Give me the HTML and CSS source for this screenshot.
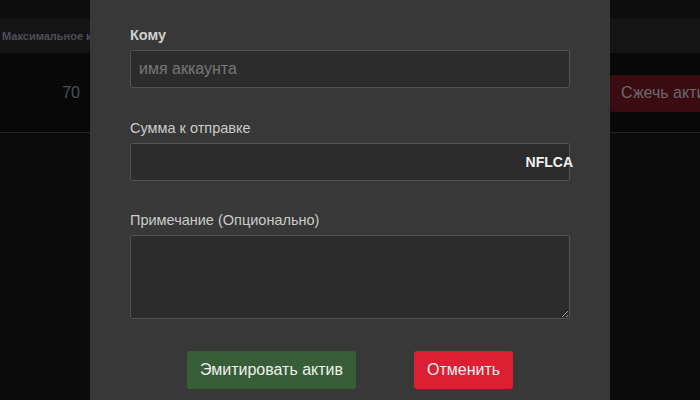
FILE: index.html
```html
<!DOCTYPE html>
<html lang="ru">
<head>
<meta charset="utf-8">
<title>Эмиссия</title>
<link rel="stylesheet" href="styles.css">
</head>
<body>
<div class="page">
  <div class="topbar"></div>
  <div class="table">
    <div class="thead">
      <div class="th">Максимальное количество</div>
      <div class="th"></div>
    </div>
    <div class="trow">
      <div class="td num">70</div>
      <div class="td act"><button class="burn">Сжечь актив</button></div>
    </div>
  </div>
</div>

<div class="modal">
  <div class="field">
    <label class="label strong">Кому</label>
    <input class="input" type="text" placeholder="имя аккаунта">
  </div>
  <div class="field">
    <label class="label">Сумма к отправке</label>
    <div class="amount">
      <input class="input" type="text">
      <span class="unit">NFLCA</span>
    </div>
  </div>
  <div class="field">
    <label class="label">Примечание (Опционально)</label>
    <textarea class="input area"></textarea>
  </div>
  <div class="actions">
    <button class="btn btn-green">Эмитировать актив</button>
    <button class="btn btn-red">Отменить</button>
  </div>
</div>
</body>
</html>
```

FILE: styles.css
```css
* { box-sizing: border-box; }
html, body { margin: 0; padding: 0; }
body {
  background: #0b0b0b;
  font-family: "Liberation Sans", Arial, sans-serif;
  width: 700px;
  height: 400px;
  overflow: hidden;
  position: relative;
}
.page { width: 700px; }
.topbar { height: 19px; background: #0d0d0d; }
.table { width: 100%; }
.thead {
  display: grid;
  grid-template-columns: 610px 90px;
  height: 34px;
  background: #141414;
  align-items: center;
}
.th {
  font-size: 11px;
  font-weight: bold;
  color: #4f4f57;
  padding-left: 2px;
  white-space: nowrap;
  overflow: hidden;
}
.trow {
  display: grid;
  grid-template-columns: 610px 90px;
  height: 80px;
  background: #080808;
  border-bottom: 1px solid #262626;
  align-items: center;
}
.td.num {
  font-size: 16px;
  color: #4c535a;
  width: 90px;
  text-align: right;
  padding-right: 10px;
}
.td.act { overflow: hidden; }
.burn {
  display: block;
  height: 37px;
  width: 140px;
  border: none;
  border-radius: 3px;
  background: #3a0b10;
  color: #6a6a6a;
  font-family: "Liberation Sans", Arial, sans-serif;
  font-size: 16px;
  text-align: left;
  padding: 0 0 0 11px;
  white-space: nowrap;
  margin-top: 1px;
}

.modal {
  position: absolute;
  left: 90px;
  top: 0;
  width: 520px;
  height: 420px;
  background: #383838;
  padding: 27px 40px 0;
}
.field { margin-bottom: 31.5px; }
.label {
  display: block;
  font-size: 14.5px;
  line-height: 17px;
  color: #cbcbcb;
  margin-bottom: 6px;
  white-space: nowrap;
}
.label.strong { font-weight: bold; color: #d0d0d0; }
.input {
  display: block;
  width: 440px;
  height: 38px;
  background: #2c2c2c;
  border: 1px solid #4b5555;
  border-radius: 2px;
  color: #ddd;
  font-family: "Liberation Sans", Arial, sans-serif;
  font-size: 16px;
  padding: 0 8px;
  outline: none;
}
.input::placeholder { color: #777; }
.amount { position: relative; }
.unit {
  position: absolute;
  right: -3px;
  top: 11px;
  font-size: 14px;
  font-weight: bold;
  color: #f2f2f2;
}
.area {
  height: 84px;
  resize: vertical;
  padding: 8px;
}
.field:nth-child(3) { margin-bottom: 32px; }
.actions {
  display: flex;
  justify-content: center;
  gap: 58px;
}
.btn {
  height: 38px;
  border: none;
  border-radius: 3px;
  font-family: "Liberation Sans", Arial, sans-serif;
  font-size: 16px;
  padding: 0 13px;
  color: #f0f0f0;
}
.btn-green { background: #375e37; }
.btn-red { background: #dc1f32; }
```
